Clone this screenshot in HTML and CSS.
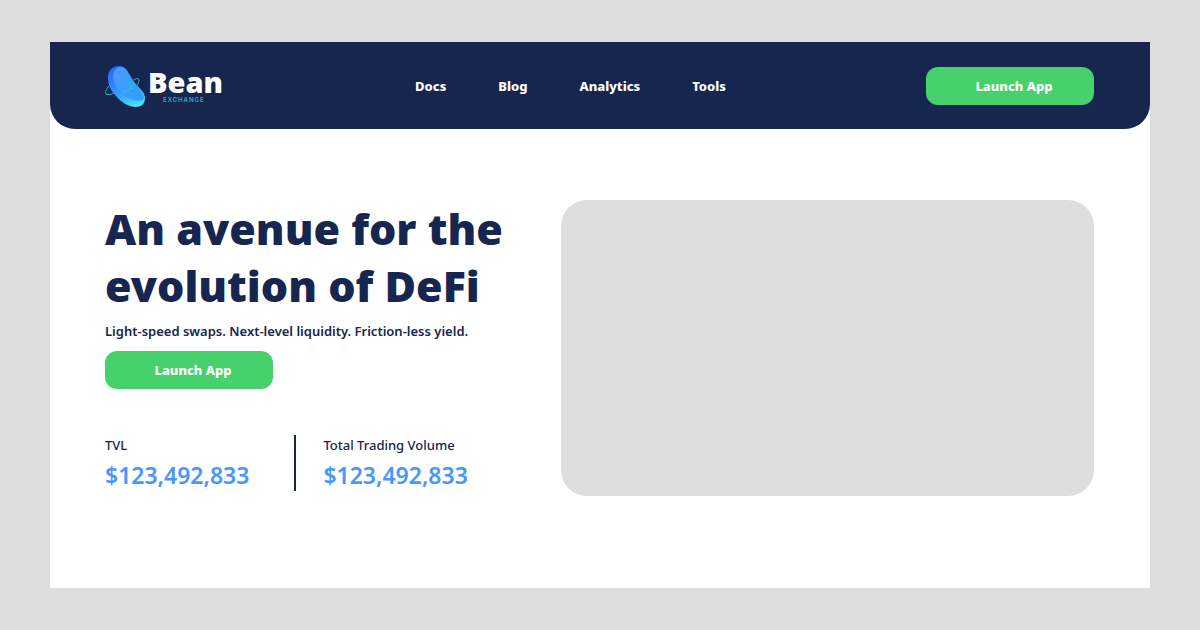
FILE: index.html
```html
<!DOCTYPE html>
<html lang="en">
<head>
<meta charset="utf-8">
<meta name="viewport" content="width=device-width, initial-scale=1">
<title>Bean Exchange</title>
<link rel="stylesheet" href="styles.css">
</head>
<body>
<div class="page">
  <header class="header">
    <a class="logo" href="#">
      <svg class="logo-mark" viewBox="0 0 42 44" aria-hidden="true">
        <defs>
          <linearGradient id="bean" x1="0.2" y1="0" x2="0.7" y2="1">
            <stop offset="0" stop-color="#2868ff"/>
            <stop offset="0.55" stop-color="#3396ff"/>
            <stop offset="1" stop-color="#42e5f5"/>
          </linearGradient>
          <linearGradient id="shine" x1="0" y1="0" x2="0.6" y2="1">
            <stop offset="0" stop-color="#4b9cff"/>
            <stop offset="1" stop-color="#329ffb"/>
          </linearGradient>
        </defs>
        <path d="M4 22C1 25 0 29 1 30C3 31 6 31 9 29" fill="none" stroke="#32bcc9" stroke-width="1"/>
        <path d="M14 2C7 2 3 7 3 13C3 21 6 27 11 32C17 39 24 43 31 43C37 43 40 39 40 34C40 28 35 25 31 20C24 12 23 2 14 2Z" fill="url(#bean)"/>
        <path d="M15 3C9 4 7 11 9 17C12 26 19 34 28 36C34 38 39 37 39 33C38 28 34 25 30 20C24 13 23 3 15 3Z" fill="url(#shine)"/>
        <path d="M18 29Q22 27 25 25L29 20M22 15Q24 17 26 24L29 25" fill="none" stroke="#28cbd0" stroke-width="1"/>
        <path d="M26 18C30 14 34 14 34 16C34 19 32 22 29 24" fill="none" stroke="#25b9c9" stroke-width="1"/>
      </svg>
      <span class="logo-text">
        <span class="logo-name">Bean</span>
        <span class="logo-sub">EXCHANGE</span>
      </span>
    </a>
    <nav class="nav">
      <a href="#">Docs</a>
      <a href="#">Blog</a>
      <a href="#">Analytics</a>
      <a href="#">Tools</a>
    </nav>
    <button class="launch" type="button">Launch App</button>
  </header>
  <main class="hero">
    <section class="intro">
      <h1 class="title">An avenue for the<br>evolution of DeFi</h1>
      <p class="tagline">Light-speed swaps. Next-level liquidity. Friction-less yield.</p>
      <button class="launch" type="button">Launch App</button>
      <dl class="stats">
        <div class="stat">
          <dt>TVL</dt>
          <dd>$123,492,833</dd>
        </div>
        <div class="stat">
          <dt>Total Trading Volume</dt>
          <dd>$123,492,833</dd>
        </div>
      </dl>
    </section>
    <div class="preview"></div>
  </main>
</div>
</body>
</html>
```
FILE: styles.css
```css
* { box-sizing: border-box; }

body {
  margin: 0;
  min-height: 100vh;
  padding: 42px 50px;
  display: flex;
  background: #dedede;
  color: #17264f;
  font-family: "Noto Sans", "Open Sans", sans-serif;
}

a { color: inherit; text-decoration: none; }

.page { flex: 1; background: #fff; }

.header {
  display: flex;
  justify-content: space-between;
  align-items: center;
  padding: 21px 56px 20px 55px;
  min-height: 87px;
  border-radius: 0 0 25px 25px;
  background: #17264f;
  color: #fff;
}

.logo { display: flex; align-items: center; gap: 1px; }
.logo-mark { width: 42px; height: 44px; }
.logo-text { display: flex; flex-direction: column; }
.logo-name { font-size: 29px; line-height: 28px; font-weight: 900; }
.logo-sub {
  padding-left: 15px;
  font: 600 6px/8px Inter, sans-serif;
  letter-spacing: 1px;
  color: #2aaed0;
}

.nav {
  display: flex;
  gap: 52px;
  padding-right: 8px;
  font-size: 13px;
  line-height: 20px;
  font-weight: 800;
}

.launch {
  width: 168px;
  padding: 9px 0 9px 8px;
  border: 0;
  border-radius: 12px;
  background: #47d16c;
  color: #fff;
  font: 800 13px/20px "Noto Sans", "Open Sans", sans-serif;
}

.hero {
  display: grid;
  grid-template-columns: 6fr 7fr;
  padding: 71px 56px 71px 55px;
}

.title { margin: 0; font-size: 43px; line-height: 57px; font-weight: 900; white-space: nowrap; }
.tagline { margin: 7px 0 10px; font-size: 13px; line-height: 20px; font-weight: 600; }

.stats { display: flex; margin: 46px 0 0; }
.stat + .stat { margin-left: 45px; padding-left: 27px; border-left: 2px solid #17264f; }
.stat dt { font-size: 13px; line-height: 20px; font-weight: 500; }
.stat dd { margin: 4px 0 0; font-size: 23px; line-height: 32px; font-weight: 600; color: #4897ff; }

.preview { min-height: 296px; border-radius: 26px; background: #dedede; }
```
